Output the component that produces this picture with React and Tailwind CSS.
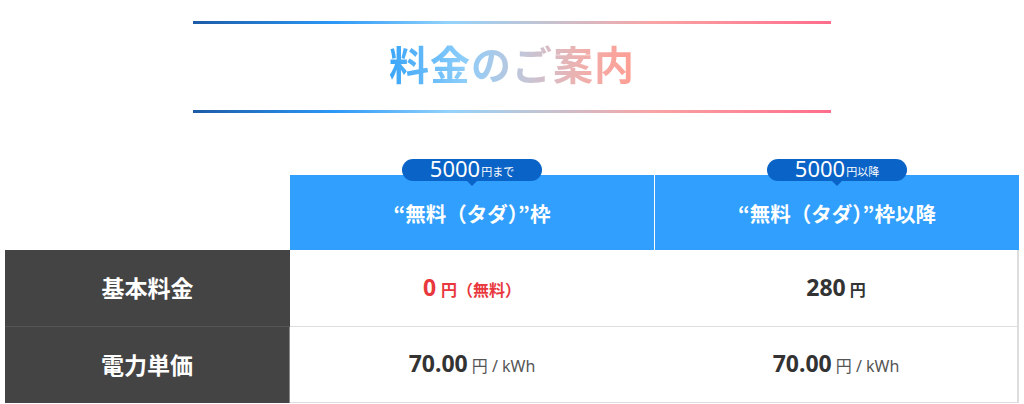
import React from 'react';

const font = { fontFamily: '"Noto Sans", "Noto Sans CJK JP", sans-serif' };
const cjk = { fontFamily: '"Noto Sans CJK JP", "Noto Sans", sans-serif' };

function Badge({ unit }) {
  return (
    <div className="absolute left-1/2 top-[-16px] -translate-x-1/2 w-[140px] h-[22px] rounded-full bg-[#0a63c6] flex items-end justify-center text-white leading-none">
      <span className="text-[22px] leading-none mb-[2px]">5000</span>
      <span className="text-[11px] leading-none mb-[4px] ml-[1px]">{unit}</span>
      <span className="absolute left-1/2 -translate-x-1/2 bottom-[-5px] w-0 h-0 border-l-[5px] border-r-[5px] border-t-[5px] border-l-transparent border-r-transparent border-t-[#0a63c6]"></span>
    </div>
  );
}

function HeaderCell({ unit, children }) {
  return (
    <div className="relative bg-[#309ffe] h-[75px] flex items-center justify-center pt-[2px]">
      <Badge unit={unit} />
      <span className="text-white font-bold text-[20.5px]" style={cjk}>{children}</span>
    </div>
  );
}

export default function App() {
  const line = 'h-[3px] w-full bg-[linear-gradient(90deg,#1d5ba6_0%,#2b98f6_22%,#92d2fb_40%,#c3c3d2_55%,#f8a4a4_72%,#ff6d8b_100%)]';

  return (
    <div className="w-[1024px] h-[404px] bg-white overflow-hidden" style={font}>
      {/* 見出し */}
      <div className="w-[638px] mx-auto pt-[21px]">
        <div className={line}></div>
        <div className="h-[86px] flex items-center justify-center">
          <h2 className="text-[40px] font-bold leading-none tracking-[1px] bg-[linear-gradient(90deg,#3aa5f8_0%,#8ccdfb_30%,#c4c6d8_55%,#efb0ad_78%,#ff9d92_100%)] bg-clip-text text-transparent pb-[4px]">
            料金のご案内
          </h2>
        </div>
        <div className={line}></div>
      </div>

      {/* 料金表 */}
      <div className="mt-[62px] mx-[5px] grid grid-cols-[285px_364px_1px_364px]">
        <div></div>
        <HeaderCell unit="円まで">“無料（タダ）”枠</HeaderCell>
        <div className="bg-white"></div>
        <HeaderCell unit="円以降">“無料（タダ）”枠以降</HeaderCell>

        <div className="bg-[#444444] h-[77px] flex items-center justify-center border-b border-[#555] text-white font-bold text-[23px]">
          基本料金
        </div>
        <div className="h-[77px] flex items-end justify-center pb-[27px] border-b border-[#dddddd] text-[#e8383d] font-bold">
          <span className="text-[23px] leading-none">0</span>
          <span className="text-[16px] leading-none ml-[5px] mb-[1px]">円（無料）</span>
        </div>
        <div className="border-b border-[#dddddd]"></div>
        <div className="h-[77px] flex items-end justify-center pb-[27px] border-b border-r-2 border-[#dddddd] text-[#333] font-bold">
          <span className="text-[23px] leading-none">280</span>
          <span className="text-[16px] leading-none ml-[4px] mb-[1px]">円</span>
        </div>

        <div className="bg-[#444444] h-[76px] flex items-center justify-center text-white font-bold text-[23px] border-r border-[#888]">
          電力単価
        </div>
        <div className="h-[76px] flex items-end justify-center pb-[27px] border-b border-[#dddddd] text-[#333]">
          <span className="text-[23px] leading-none font-bold">70.00</span>
          <span className="text-[16px] leading-none ml-[4px] mb-[1px] text-[#555]">円 / kWh</span>
        </div>
        <div className="border-b border-[#dddddd]"></div>
        <div className="h-[76px] flex items-end justify-center pb-[27px] border-b border-r-2 border-[#dddddd] text-[#333]">
          <span className="text-[23px] leading-none font-bold">70.00</span>
          <span className="text-[16px] leading-none ml-[4px] mb-[1px] text-[#555]">円 / kWh</span>
        </div>
      </div>
    </div>
  );
}
